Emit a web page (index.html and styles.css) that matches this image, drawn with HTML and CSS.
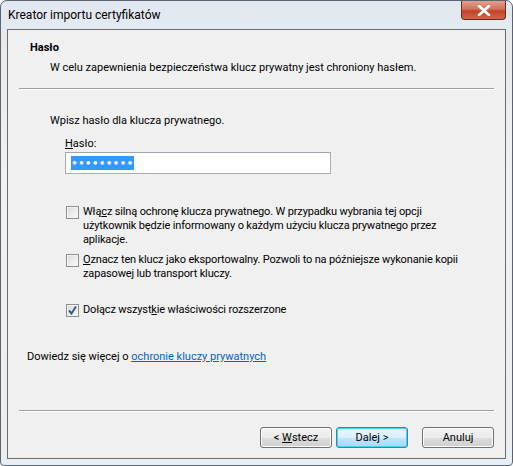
FILE: index.html
```html
<!DOCTYPE html>
<html lang="pl">
<head>
  <meta charset="UTF-8" />
  <title>Kreator importu certyfikatów</title>
  <link rel="stylesheet" href="styles.css">
</head>
<body>
  <div class="window">
    <div class="titlebar">
      <span class="title">Kreator importu certyfikatów</span>
      <span class="close">
        <svg width="14" height="11" viewBox="0 0 14 11">
          <path d="M2 1 L12 10 M12 1 L2 10" stroke="#fff" stroke-width="2.6" stroke-linecap="round" fill="none"/>
        </svg>
      </span>
    </div>

    <div class="client">
      <div class="header">
        <div class="header-title">Hasło</div>
        <div class="header-sub">W celu zapewnienia bezpieczeństwa klucz prywatny jest chroniony hasłem.</div>
      </div>
      <div class="sep"></div>

      <div class="content">
        <p class="intro">Wpisz hasło dla klucza prywatnego.</p>
        <div class="field">
          <label class="field-label"><u>H</u>asło:</label>
          <div class="textbox"><span class="selected">●●●●●●●●●</span></div>
        </div>

        <div class="options">
          <div class="option">
            <span class="check"></span>
            <span class="option-text">Włą<u>c</u>z silną ochronę klucza prywatnego. W przypadku wybrania tej opcji użytkownik będzie informowany o każdym użyciu klucza prywatnego przez aplikacje.</span>
          </div>
          <div class="option">
            <span class="check"></span>
            <span class="option-text"><u>O</u>znacz ten klucz jako eksportowalny. Pozwoli to na późniejsze wykonanie kopii zapasowej lub transport kluczy.</span>
          </div>
          <div class="option last">
            <span class="check checked">
              <svg width="11" height="11" viewBox="0 0 11 11">
                <path d="M2 5.5 L4.5 8.5 L9 1.5" stroke="#3d5a96" stroke-width="2" fill="none"/>
              </svg>
            </span>
            <span class="option-text">Dołącz wszyst<u>k</u>ie właściwości rozszerzone</span>
          </div>
        </div>

        <p class="more">Dowiedz się więcej o <a href="#">ochronie kluczy prywatnych</a></p>
      </div>

      <div class="sep"></div>
      <div class="buttons">
        <button class="btn">&lt; <u>W</u>stecz</button>
        <button class="btn default">Dalej &gt;</button>
        <button class="btn cancel">Anuluj</button>
      </div>
    </div>
  </div>
</body>
</html>
```

FILE: styles.css
```css
body {
  margin: 0;
  background: #fff;
  font-family: Roboto, Arial, sans-serif;
  font-size: 11px;
  color: #000;
}
.window {
  width: 511px;
  height: 464px;
  border: 1px solid #5a6470;
  border-radius: 7px 7px 4px 4px;
  background: linear-gradient(to bottom, #e2e8ef 0%, #eef2f6 40%, #e9eef3 100%);
  display: flex;
  flex-direction: column;
}
.titlebar {
  height: 28px;
  display: flex;
  justify-content: space-between;
  align-items: flex-start;
}
.title {
  padding: 7px 0 0 7px;
  font-size: 12px;
}
.close {
  width: 43px;
  height: 18px;
  margin-right: 6px;
  border: 1px solid #6e2a20;
  border-top: none;
  border-radius: 0 0 4px 4px;
  background: linear-gradient(to bottom, #e3a08f 0%, #d2715a 45%, #c1432a 55%, #d4654a 100%);
  display: flex;
  align-items: center;
  justify-content: center;
}
.client {
  flex: 1;
  margin: 0 6px 6px 6px;
  border: 1px solid #6d6d6d;
  background: #f0f0f0;
  display: flex;
  flex-direction: column;
}
.header {
  padding: 11px 0 0 22px;
  height: 58px;
  box-sizing: border-box;
}
.header-title {
  font-weight: bold;
  font-size: 11px;
  line-height: 14px;
}
.header-sub {
  margin-top: 5px;
  padding-left: 20px;
  line-height: 16px;
}
.sep {
  margin: 0 11px;
  height: 1px;
  background: #a0a0a0;
  border-bottom: 1px solid #fff;
}
.content {
  flex: 1;
  padding: 23px 0 0 42px;
}
.intro {
  margin: 0;
  line-height: 16px;
}
.field {
  margin: 8px 0 0 15px;
}
.field-label {
  display: block;
  line-height: 14px;
}
.textbox {
  margin-top: 1px;
  width: 259px;
  height: 20px;
  border: 1px solid #abadb3;
  border-top-color: #a0a4ad;
  background: #fff;
  display: flex;
  align-items: center;
  padding-left: 5px;
}
.selected {
  background: #3399ff;
  color: #fff;
  font-size: 8px;
  line-height: 14px;
  letter-spacing: 2.1px;
  padding: 0 0 0 1px;
}
.options {
  margin: 31px 0 0 16px;
}
.option {
  display: flex;
  align-items: flex-start;
  gap: 4px;
  margin-bottom: 6px;
}
.option.last {
  margin-top: 22px;
}
.check {
  flex: none;
  width: 11px;
  height: 11px;
  margin-top: 1px;
  border: 1px solid #8e8f8f;
  background: linear-gradient(135deg, #dcdcdc 0%, #eeeeee 60%, #fbfbfb 100%);
  box-shadow: inset 0 0 0 1px #f4f4f4;
  display: flex;
  align-items: center;
  justify-content: center;
}
.check.checked {
  background: linear-gradient(135deg, #d6d6d6 0%, #f0f0f0 70%, #fdfdfd 100%);
}
.option-text {
  width: 392px;
  line-height: 14px;
  letter-spacing: -0.15px;
}
.more {
  margin: 32px 0 0 -23px;
  line-height: 16px;
}
.more a {
  color: #0066cc;
}
.buttons {
  display: flex;
  justify-content: flex-end;
  gap: 4px;
  padding: 15px 11px 0 0;
  height: 46px;
  box-sizing: border-box;
}
.btn {
  width: 72px;
  height: 21px;
  padding: 0;
  font-family: Roboto, Arial, sans-serif;
  font-size: 11px;
  color: #000;
  border: 1px solid #707070;
  border-radius: 3px;
  background: linear-gradient(to bottom, #f2f2f2 0%, #ebebeb 50%, #dddddd 51%, #cfcfcf 100%);
  box-shadow: inset 0 0 0 1px #fcfcfc;
}
.btn.default {
  border-color: #3c7fb1;
  background: linear-gradient(to bottom, #eaf6fd 0%, #d9f0fc 50%, #bee6fd 51%, #a7d9f5 100%);
  box-shadow: inset 0 0 0 1px #48d2f6;
}
.btn.cancel {
  margin-left: 10px;
}
```
